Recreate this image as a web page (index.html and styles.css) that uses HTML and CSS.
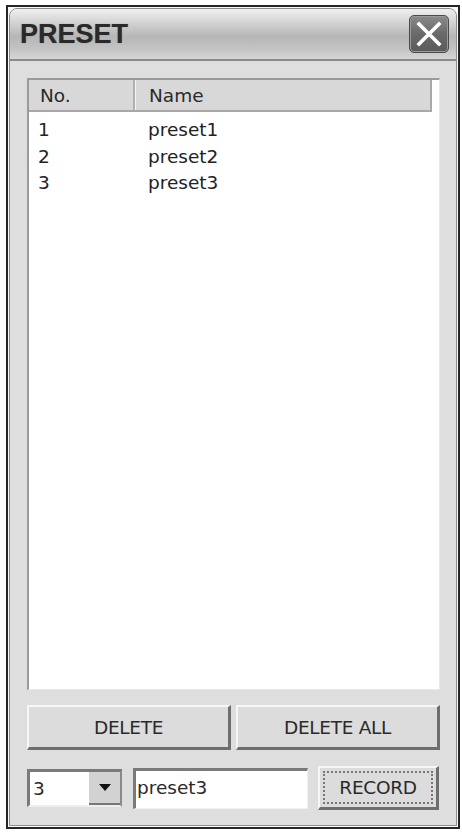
FILE: index.html
```html
<!DOCTYPE html>
<html>
<head>
<meta charset="utf-8">
<link rel="stylesheet" href="styles.css">
</head>
<body>
<div class="frame">
  <div class="window">
    <div class="titlebar">
      <span class="title">PRESET</span>
      <div class="close">
        <svg width="26" height="26" viewBox="0 0 26 26"><path d="M3 3 L23 23 M23 3 L3 23" stroke="#fff" stroke-width="3.6" stroke-linecap="square" fill="none"/></svg>
      </div>
    </div>
    <div class="content">
      <div class="listbox">
        <div class="header">
          <div class="hcell c1">No.</div>
          <div class="hcell c2">Name</div>
        </div>
        <div class="rows">
          <div class="row"><span class="c1">1</span><span class="c2">preset1</span></div>
          <div class="row"><span class="c1">2</span><span class="c2">preset2</span></div>
          <div class="row"><span class="c1">3</span><span class="c2">preset3</span></div>
        </div>
      </div>
      <div class="btnrow">
        <div class="btn">DELETE</div>
        <div class="btn">DELETE ALL</div>
      </div>
      <div class="inputrow">
        <div class="combo">
          <span class="comboval">3</span>
          <span class="arrow"><svg width="12" height="8" viewBox="0 0 12 8"><path d="M0 0 H12 L6 7 Z" fill="#111"/></svg></span>
        </div>
        <div class="field">preset3</div>
        <div class="btn rec"><span class="focus">RECORD</span></div>
      </div>
    </div>
  </div>
</div>
</body>
</html>
```
FILE: styles.css
```css
html, body {
  margin: 0;
  padding: 0;
  background: #fff;
}
body {
  width: 462px;
  height: 834px;
  font-family: "DejaVu Sans", Verdana, sans-serif;
  color: #2a2a2a;
}
.frame {
  margin: 5px 0 0 6px;
  width: 448px;
  height: 818px;
  border: 2px solid #262626;
  padding: 1px;
  background: #fafafa;
}
.window {
  box-sizing: border-box;
  height: 100%;
  border: 1px solid #8c8c8c;
  border-radius: 8px 8px 0 0;
  background: #dedede;
  display: flex;
  flex-direction: column;
  overflow: hidden;
}
.titlebar {
  box-sizing: border-box;
  height: 52px;
  flex: none;
  display: flex;
  align-items: center;
  justify-content: space-between;
  padding: 0 7px 0 10px;
  background: linear-gradient(to bottom, #f0f0f0 0%, #d2d2d2 28%, #b6b6b6 55%, #c4c4c4 80%, #d6d6d6 100%);
  border-bottom: 2px solid #8a8a8a;
}
.title {
  font-family: "Liberation Sans", Arial, sans-serif;
  font-weight: bold;
  font-size: 27px;
  color: #2a2a2a;
  text-shadow: 0 0 1px rgba(0,0,0,0.35);
  margin-top: 1px;
}
.close {
  box-sizing: border-box;
  width: 40px;
  height: 38px;
  border-radius: 5px;
  border: 1px solid #4a4a4a;
  background: linear-gradient(to bottom, #8a8a8a 0%, #6a6a6a 50%, #5a5a5a 100%);
  box-shadow: inset 0 0 0 1px #9a9a9a;
  display: flex;
  align-items: center;
  justify-content: center;
}
.content {
  flex: 1;
  display: flex;
  flex-direction: column;
  padding: 17px 16px 15px 17px;
  background: #dedede;
}
.listbox {
  box-sizing: border-box;
  height: 612px;
  flex: none;
  background: #fff;
  border-top: 2px solid #9a9a9a;
  border-left: 2px solid #9a9a9a;
  border-right: 1px solid #e8e8e8;
  border-bottom: 1px solid #e8e8e8;
  padding-right: 7px;
}
.header {
  box-sizing: border-box;
  height: 32px;
  display: flex;
  background: #d8d8d8;
  border-bottom: 2px solid #a8a8a8;
  border-right: 2px solid #a8a8a8;
}
.hcell {
  box-sizing: border-box;
  font-size: 18.5px;
  line-height: 32px;
  color: #2a2a2a;
}
.hcell.c1 {
  width: 106px;
  padding-left: 11px;
  border-right: 2px solid #b0b0b0;
}
.hcell.c2 {
  flex: 1;
  padding-left: 13px;
  border-left: 1px solid #f4f4f4;
}
.rows {
  padding-top: 5px;
}
.row {
  display: flex;
  height: 26.5px;
  font-size: 18.5px;
  line-height: 26.5px;
  color: #222;
}
.row .c1 {
  width: 119px;
  padding-left: 9px;
  box-sizing: border-box;
}
.btnrow {
  display: flex;
  gap: 5px;
  margin-top: 15px;
  height: 45px;
  flex: none;
}
.btn {
  box-sizing: border-box;
  flex: 1;
  display: flex;
  align-items: center;
  justify-content: center;
  background: #dcdcdc;
  border-top: 2px solid #f6f6f6;
  border-left: 2px solid #f6f6f6;
  border-right: 3px solid #6e6e6e;
  border-bottom: 3px solid #6e6e6e;
  font-size: 18.5px;
  color: #2a2a2a;
  letter-spacing: -0.3px;
}
.inputrow {
  display: flex;
  align-items: center;
  margin-top: 16px;
  height: 44px;
}
.combo {
  box-sizing: border-box;
  width: 95px;
  height: 38px;
  display: flex;
  align-items: stretch;
  background: #fff;
  border-top: 3px solid #7a7a7a;
  border-left: 3px solid #7a7a7a;
  border-right: 2px solid #8a8a8a;
  border-bottom: 2px solid #eeeeee;
}
.comboval {
  flex: 1;
  font-size: 18.5px;
  line-height: 33px;
  padding-left: 3px;
}
.arrow {
  box-sizing: border-box;
  width: 31px;
  display: flex;
  align-items: center;
  justify-content: center;
  background: #d2d2d2;
  border-bottom: 2px solid #777;
}
.field {
  box-sizing: border-box;
  width: 175px;
  height: 41px;
  margin-left: 11px;
  background: #fff;
  border-top: 3px solid #7a7a7a;
  border-left: 3px solid #7a7a7a;
  border-right: 1px solid #f0f0f0;
  border-bottom: 1px solid #f0f0f0;
  font-size: 18.5px;
  line-height: 34px;
  padding-left: 1px;
  color: #2a2a2a;
}
.btn.rec {
  flex: none;
  width: 121px;
  height: 44px;
  margin-left: 10px;
  padding: 3px;
  align-items: stretch;
  justify-content: stretch;
}
.focus {
  flex: 1;
  display: flex;
  align-items: center;
  justify-content: center;
  border: 2px dotted #777;
}
```
